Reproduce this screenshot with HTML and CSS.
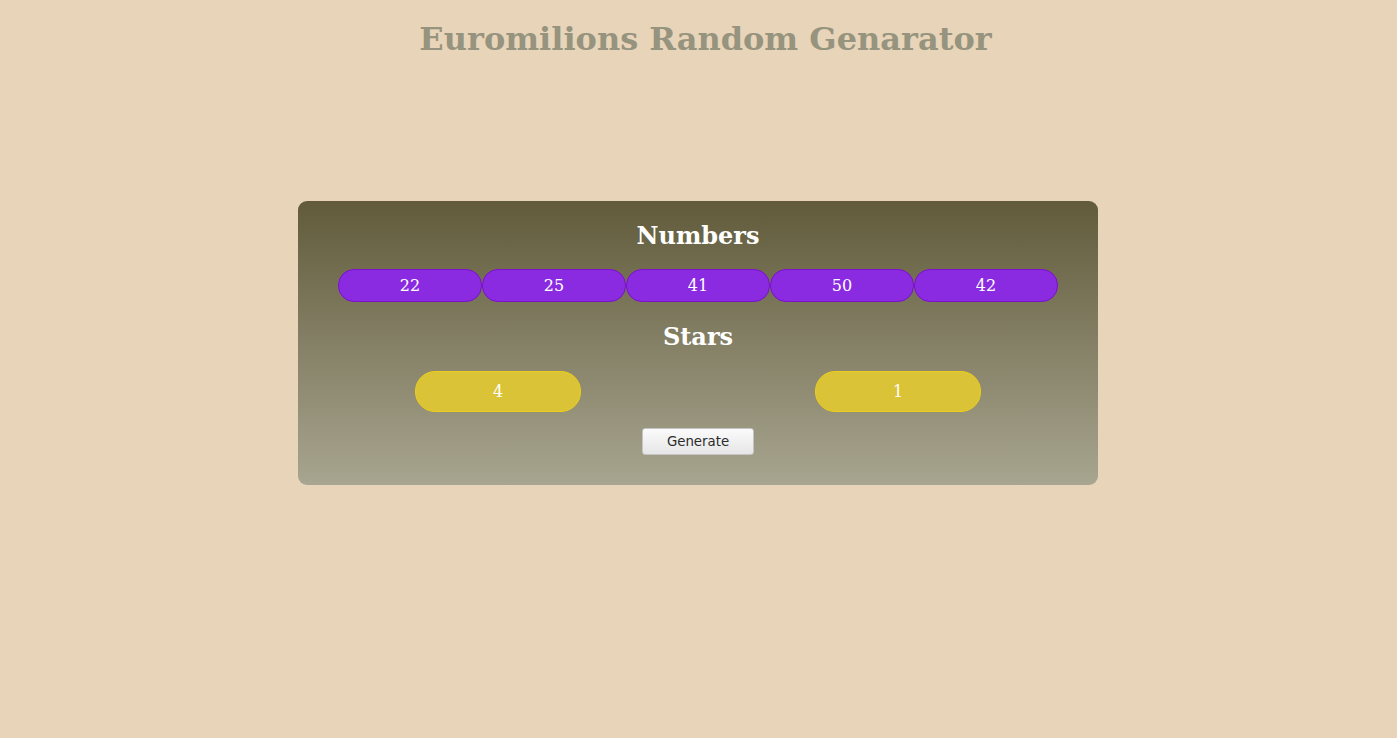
FILE: index.html
```html
<!DOCTYPE html>
<html>
<head>
<meta charset="utf-8">
<title>Euromilions Random Genarator</title>
<link rel="stylesheet" href="styles.css">
</head>
<body>
<h1 class="title">Euromilions Random Genarator</h1>
<main class="card">
  <h2 class="section-title">Numbers</h2>
  <div class="numbers">
    <span class="ball">22</span>
    <span class="ball">25</span>
    <span class="ball">41</span>
    <span class="ball">50</span>
    <span class="ball">42</span>
  </div>
  <h2 class="section-title stars-title">Stars</h2>
  <div class="stars">
    <span class="star">4</span>
    <span class="star">1</span>
  </div>
  <div class="actions">
    <button class="generate">Generate</button>
  </div>
</main>
</body>
</html>
```
FILE: styles.css
```css
html, body {
  margin: 0;
  padding: 0;
}
body {
  background: #e8d4b8;
  font-family: "DejaVu Serif", serif;
  padding: 8px 8px 8px 7px;
}
.title {
  margin: 13px 0 0;
  padding-left: 15px;
  text-align: center;
  font-size: 32px;
  line-height: 37px;
  font-weight: bold;
  color: #96937e;
}
.card {
  width: 800px;
  box-sizing: border-box;
  margin: 143px auto 0;
  padding: 19px 0 30px;
  border-radius: 9px;
  background: linear-gradient(to bottom, #615b3b 0%, #a8a590 100%);
}
.section-title {
  margin: 0;
  text-align: center;
  color: #ffffff;
  font-size: 24px;
  line-height: 32px;
  font-weight: bold;
}
.numbers {
  display: flex;
  justify-content: center;
  margin-top: 17px;
}
.ball {
  width: 144px;
  height: 33px;
  box-sizing: border-box;
  border: 1px solid #7a12c8;
  border-radius: 16px;
  background: #8a2be2;
  color: #ffffff;
  font-size: 16px;
  line-height: 31px;
  text-align: center;
}
.stars-title {
  margin-top: 19px;
}
.stars {
  display: flex;
  justify-content: space-around;
  margin-top: 18px;
}
.star {
  width: 166px;
  height: 41px;
  box-sizing: border-box;
  border: 1px solid #ecce1a;
  border-radius: 20px;
  background: #dbc337;
  color: #ffffff;
  font-size: 16px;
  line-height: 39px;
  text-align: center;
}
.actions {
  display: flex;
  justify-content: center;
  margin-top: 16px;
}
.generate {
  width: 112px;
  height: 27px;
  box-sizing: border-box;
  border: 1px solid #c4c4c4;
  border-radius: 3px;
  background: linear-gradient(to bottom, #fbfbfb, #e6e6e6);
  color: #2b2b2b;
  font-family: "DejaVu Sans", sans-serif;
  font-size: 13.33px;
  padding: 0;
}
```
